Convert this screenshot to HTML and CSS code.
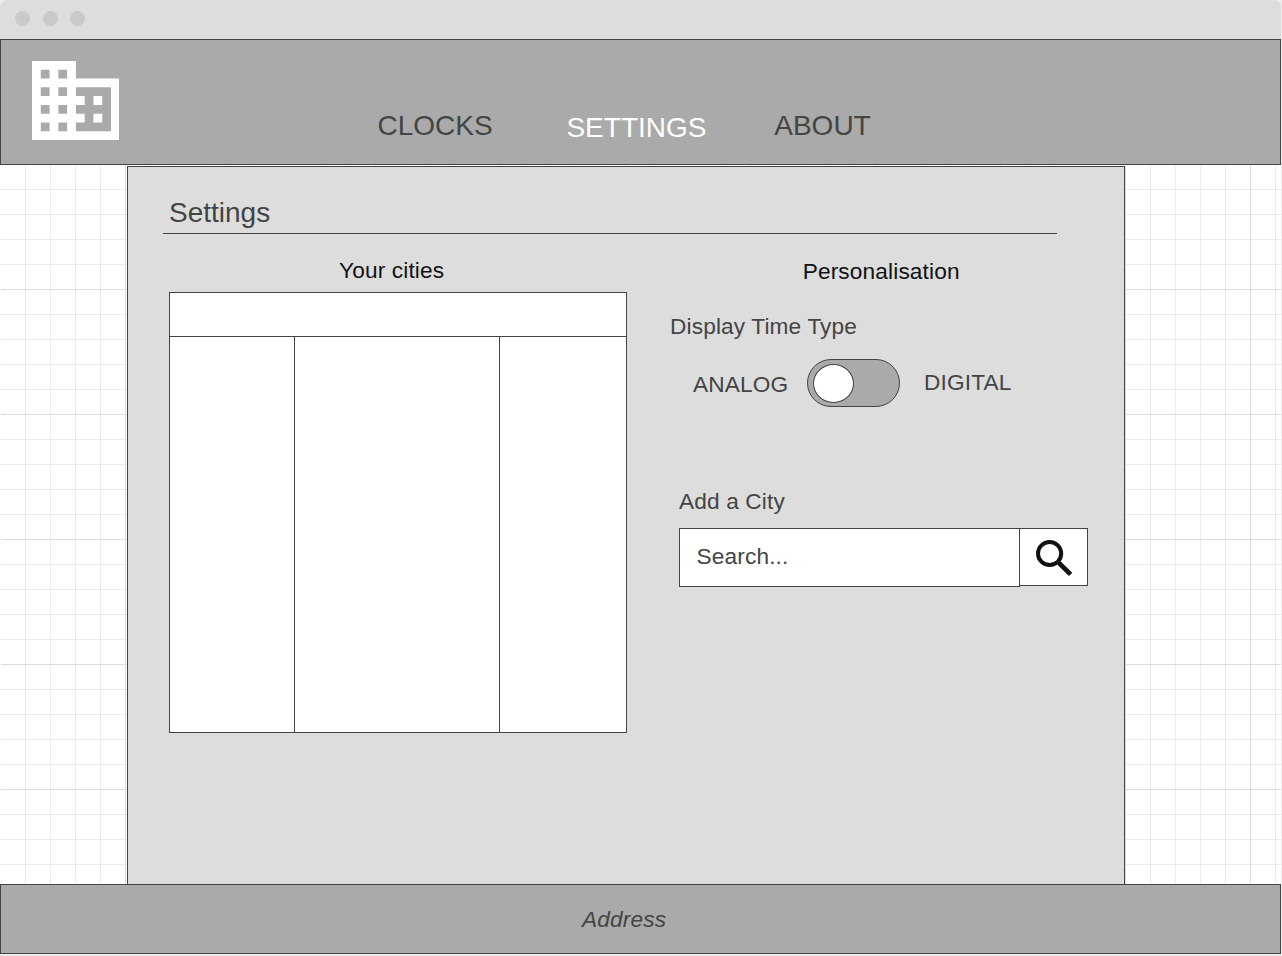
FILE: index.html
```html
<!DOCTYPE html>
<html lang="en">
<head>
<meta charset="utf-8">
<title>Settings</title>
<link rel="stylesheet" href="styles.css">
</head>
<body>
<div class="window">
  <div class="titlebar"><span class="dot"></span><span class="dot"></span><span class="dot"></span></div>
  <header class="header">
    <svg class="logo" viewBox="2 3 20 18" aria-hidden="true">
      <path fill="#fff" d="M12 7V3H2v18h20V7H12zM6 19H4v-2h2v2zm0-4H4v-2h2v2zm0-4H4V9h2v2zm0-4H4V5h2v2zm4 12H8v-2h2v2zm0-4H8v-2h2v2zm0-4H8V9h2v2zm0-4H8V5h2v2zm10 12h-8v-2h2v-2h-2v-2h2v-2h-2V9h8v10zm-2-8h-2v2h2v-2zm0 4h-2v2h2v-2z"/>
    </svg>
    <nav class="nav">
      <a class="nav-link">CLOCKS</a>
      <a class="nav-link active">SETTINGS</a>
      <a class="nav-link">ABOUT</a>
    </nav>
  </header>
  <main class="main">
    <section class="panel">
      <h1 class="title">Settings</h1>
      <div class="columns">
        <div class="cities">
          <h2 class="cities-title">Your cities</h2>
          <div class="table">
            <div class="table-head"></div>
            <div class="table-body"><div class="cell"></div><div class="cell"></div><div class="cell"></div></div>
          </div>
        </div>
        <div class="personal">
          <h2 class="personal-title">Personalisation</h2>
          <p class="display-label">Display Time Type</p>
          <div class="toggle-row">
            <span class="analog">ANALOG</span>
            <span class="toggle"><span class="knob"></span></span>
            <span class="digital">DIGITAL</span>
          </div>
          <p class="add-label">Add a City</p>
          <div class="search">
            <div class="search-field">Search...</div>
            <div class="search-button">
              <svg class="search-icon" viewBox="0 0 38 38" aria-hidden="true">
                <g fill="none" stroke="#111" stroke-width="4">
                  <circle cx="14.6" cy="14.5" r="11.6"/>
                  <path d="M22.5 22.3L25 25"/>
                  <path stroke-width="4.8" d="M24.4 24.4L35.6 35.4"/>
                </g>
              </svg>
            </div>
          </div>
        </div>
      </div>
    </section>
  </main>
  <footer class="footer"><address class="address">Address</address></footer>
</div>
</body>
</html>
```
FILE: styles.css
```css
* { box-sizing: border-box; }
body {
  margin: 0;
  background: #eee;
  color: #444;
  font: 22.67px/25px "Liberation Sans", Arial, sans-serif;
  letter-spacing: 0.14px;
}
h1, h2, p { margin: 0; font-size: inherit; font-weight: normal; }
.window { display: flex; flex-direction: column; width: 1281px; height: 954px; }
.titlebar {
  display: flex;
  gap: 12.5px;
  height: 39px;
  padding: 11px 15px;
  background: #ddd;
  border-radius: 7px 7px 0 0;
}
.dot { width: 15px; height: 15px; border-radius: 50%; background: #cacaca; }
.header {
  display: flex;
  align-items: flex-start;
  height: 126px;
  background: #aaa;
  border: 1px solid #444;
}
.logo { width: 87.8px; height: 79px; margin: 20.5px 0 0 30.7px; }
.nav {
  display: flex;
  margin: 70px 0 0 258px;
  gap: 73.8px;
  font-size: 28px;
  line-height: 31px;
  letter-spacing: 0;
}
.nav-link.active { color: #fff; padding-top: 2px; margin-right: -6px; }
.main {
  height: 719px;
  padding: 1px 0 0 127px;
  background-color: #fff;
  background-image:
    linear-gradient(90deg, #fff 1px, transparent 1px),
    linear-gradient(#dcdcdc 1px, transparent 1px),
    linear-gradient(90deg, #dcdcdc 1px, transparent 1px),
    linear-gradient(#eaeaea 1px, transparent 1px),
    linear-gradient(90deg, #eaeaea 1px, transparent 1px);
  background-size: 100% 100%, 125px 125px, 125px 125px, 25px 25px, 25px 25px;
  background-position: 0 0, 0 -1px, 0 0, 0 -1px, 0 0;
}
.panel {
  width: 998px;
  height: 718px;
  padding: 30px 0 0 35px;
  background: #ddd;
  border: 1px solid #444;
  border-bottom: 0;
}
.title {
  width: 894px;
  height: 37px;
  padding-left: 6px;
  border-bottom: 1px solid #444;
  font-size: 28px;
  line-height: 31px;
  letter-spacing: 0;
}
.columns { display: flex; padding: 24px 0 0 6px; }
.cities { width: 458px; }
.cities-title { padding-left: 170px; color: #111; }
.table {
  height: 441px;
  margin-top: 9px;
  border: 1px solid #444;
  background: #fff;
}
.table-head { height: 44px; border-bottom: 1px solid #444; }
.table-body { display: grid; grid-template-columns: 124px 205px 1fr; height: 395px; }
.cell + .cell { border-left: 1px solid #444; }
.personal { margin-left: 43px; }
.personal-title { padding: 1px 0 0 132.7px; color: #111; }
.display-label { margin-top: 30px; }
.toggle-row { display: flex; align-items: flex-start; height: 48px; margin-top: 20px; padding-left: 23px; }
.analog { width: 114px; padding-top: 13px; }
.toggle {
  width: 93px;
  height: 48px;
  padding: 4px 5px;
  background: #aaa;
  border: 1px solid #444;
  border-radius: 24px;
}
.knob { display: block; width: 41px; height: 39px; background: #fff; border: 1px solid #444; border-radius: 50%; }
.digital { margin-left: 24px; padding-top: 11px; }
.add-label { margin: 82px 0 0 9px; }
.search { display: flex; align-items: flex-start; margin: 14px 0 0 9px; }
.search-field {
  width: 341px;
  height: 59px;
  padding: 15px 16.5px;
  background: #fff;
  border: 1px solid #444;
}
.search-button {
  width: 69px;
  height: 58px;
  margin-left: -1px;
  padding: 10px 15px;
  background: #fff;
  border: 1px solid #444;
}
.search-icon { display: block; width: 38px; height: 38px; }
.footer { height: 70px; background: #aaa; border: 1px solid #444; }
.address { margin: 22px 0 0 581px; }
```
